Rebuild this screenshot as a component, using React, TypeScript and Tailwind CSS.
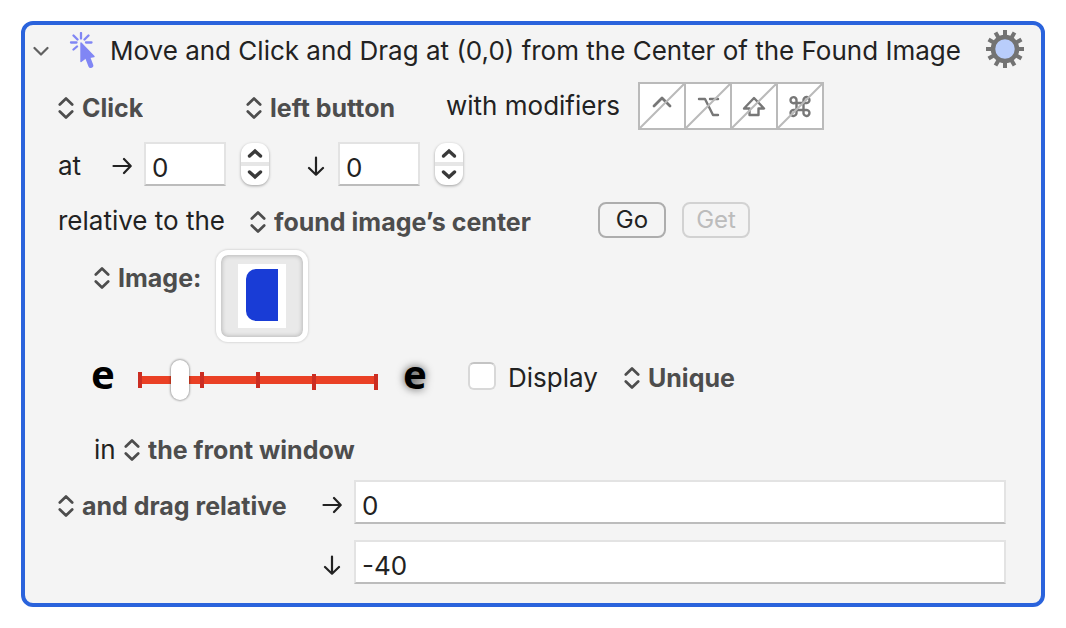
import type { ReactNode } from 'react'

interface PopupProps {
  label: string
  options: string[]
}

// pop-up menu with the chevrons on its left side
function Popup({ label, options }: PopupProps) {
  return (
    <div className="relative flex items-center">
      <svg
        className="pointer-events-none absolute left-0 h-6 w-4"
        viewBox="0 0 16 24"
        fill="none"
        stroke="#4d4d4d"
        strokeWidth="2.7"
        strokeLinecap="round"
        strokeLinejoin="round"
      >
        <path d="M1.8 8.5 L8 2.5 L14.2 8.5 M1.8 15.5 L8 21.5 L14.2 15.5" />
      </svg>
      <select
        aria-label={label}
        className="h-8 appearance-none bg-transparent pl-6 text-[25px] leading-8 font-bold text-[#4d4d4d] [field-sizing:content]"
      >
        {options.map((option) => (
          <option key={option}>{option}</option>
        ))}
      </select>
    </div>
  )
}

function ArrowRight() {
  return (
    <svg
      className="h-5 w-5 shrink-0"
      viewBox="0 0 20 20"
      fill="none"
      stroke="#222"
      strokeWidth="2.2"
      strokeLinecap="round"
      strokeLinejoin="round"
    >
      <path d="M1.5 10 H18.5 M12 3 L18.7 10 L12 17" />
    </svg>
  )
}

function ArrowDown() {
  return (
    <svg
      className="h-5 w-5 shrink-0"
      viewBox="0 0 20 20"
      fill="none"
      stroke="#222"
      strokeWidth="2.2"
      strokeLinecap="round"
      strokeLinejoin="round"
    >
      <path d="M10 1.5 V18.5 M3 12 L10 18.7 L17 12" />
    </svg>
  )
}

interface FieldProps {
  label: string
  value: string
  wide?: boolean
}

function Field({ label, value, wide = false }: FieldProps) {
  return (
    <input
      type="text"
      aria-label={label}
      defaultValue={value}
      className={`h-11 border-2 border-[#e3e3e3] border-b-[#bcbcbc] bg-white px-1.5 pt-1.5 text-[26px] text-[#222] ${
        wide ? 'min-w-0 flex-1' : 'w-[82px]'
      }`}
    />
  )
}

function Stepper({ label }: { label: string }) {
  return (
    <div className="flex h-[42px] w-7 flex-col overflow-hidden rounded-[11px] bg-white shadow-[0_1px_3px_rgba(0,0,0,0.35)]">
      <button
        aria-label={`Increase ${label}`}
        className="flex flex-1 items-center justify-center border-b-2 border-[#e6e6e6]"
      >
        <svg className="h-3 w-4" viewBox="0 0 16 12" fill="none" stroke="#3a3a3a" strokeWidth="3.4" strokeLinecap="round">
          <path d="M2.5 9 L8 4 L13.5 9" />
        </svg>
      </button>
      <button
        aria-label={`Decrease ${label}`}
        className="flex flex-1 items-center justify-center border-t-2 border-[#e6e6e6]"
      >
        <svg className="h-3 w-4" viewBox="0 0 16 12" fill="none" stroke="#3a3a3a" strokeWidth="3.4" strokeLinecap="round">
          <path d="M2.5 2 L8 7 L13.5 2" />
        </svg>
      </button>
    </div>
  )
}

// modifier key, crossed out while it is ignored
function Modifier({ label, children }: { label: string; children: ReactNode }) {
  return (
    <button aria-label={label} className="h-11 w-11 bg-white">
      <svg
        className="h-11 w-11"
        viewBox="0 0 44 44"
        fill="none"
        stroke="#777"
        strokeWidth="2.4"
        strokeLinecap="round"
        strokeLinejoin="round"
      >
        {children}
        <path d="M0 44 L44 0" stroke="#bababa" strokeWidth="2" />
      </svg>
    </button>
  )
}

function ClickIcon() {
  return (
    <svg className="h-[38px] w-[30px]" viewBox="0 0 30 38" fill="none" stroke="#8086f4" strokeLinecap="round">
      <path
        strokeWidth="2.3"
        d="M13 1 V6.5 M3 10.5 H8.5 M18 10.5 H23.5 M5.5 3.5 L9.5 7.5 M20.5 3.5 L16.5 7.5 M5.5 17.5 L9 14.5"
      />
      <path
        fill="#8086f4"
        strokeWidth="1.4"
        strokeLinejoin="round"
        d="M13 11 V29.5 L17.5 26 L26 24.5 Z"
      />
      <path strokeWidth="5" d="M19.5 25 L22.8 33.5" />
    </svg>
  )
}

function GearIcon() {
  const teeth = [0, 30, 60, 90, 120, 150, 180, 210, 240, 270, 300, 330]

  return (
    <svg className="h-[38px] w-[38px]" viewBox="0 0 38 38">
      {teeth.map((angle) => (
        <path key={angle} d="M19 0 V8" stroke="#737373" strokeWidth="4" transform={`rotate(${angle} 19 19)`} />
      ))}
      <circle cx="19" cy="19" r="12" fill="#b9cdfb" stroke="#737373" strokeWidth="4.5" />
    </svg>
  )
}

function ThresholdSlider() {
  return (
    <div className="relative h-[42px] w-[240px]">
      <svg className="absolute inset-0 h-[42px] w-[240px]" viewBox="0 0 240 42">
        <path d="M2 21 H238" stroke="#ea4025" strokeWidth="8" />
        <path d="M2 13 V29 M64 13 V29 M120 13 V29 M176 15 V31 M238 15 V31" stroke="#cb2d22" strokeWidth="4" />
      </svg>
      <input
        type="range"
        aria-label="Fuzziness"
        min="0"
        max="100"
        defaultValue="15"
        className="absolute inset-0 h-[42px] w-[240px] appearance-none bg-transparent [&::-webkit-slider-thumb]:h-[40px] [&::-webkit-slider-thumb]:w-[18px] [&::-webkit-slider-thumb]:appearance-none [&::-webkit-slider-thumb]:rounded-full [&::-webkit-slider-thumb]:bg-white [&::-webkit-slider-thumb]:shadow-[0_0_2px_1px_rgba(0,0,0,0.3)]"
      />
    </div>
  )
}

export default function App() {
  return (
    <div className="bg-white p-[21px] font-[Inter,'Liberation_Sans',sans-serif] text-[26px] leading-8 text-[#222]">
      <div className="rounded-xl border-4 border-[#2a63dc] bg-[#f4f4f4] pb-[19px]">
        {/* title */}
        <div className="flex h-[52px] items-center pr-[17px] pl-2">
          <button aria-label="Collapse action" className="mr-[19px]">
            <svg
              className="h-4 w-4"
              viewBox="0 0 16 16"
              fill="none"
              stroke="#606060"
              strokeWidth="2.2"
              strokeLinecap="round"
              strokeLinejoin="round"
            >
              <path d="M1.5 5 L8 11.5 L14.5 5" />
            </svg>
          </button>
          <ClickIcon />
          <h1 className="ml-3 flex-1 whitespace-nowrap">
            Move and Click and Drag at (0,0) from the Center of the Found Image
          </h1>
          <button aria-label="Action menu" className="pb-1">
            <GearIcon />
          </button>
        </div>

        <div className="pr-[35px] pl-[33px]">
          {/* click type */}
          <div className="mt-[5px] flex h-12 items-center">
            <div className="w-[188px] pt-1">
              <Popup label="Click type" options={['Click', 'Double Click']} />
            </div>
            <div className="w-[200px] pt-1">
              <Popup label="Mouse button" options={['left button', 'right button']} />
            </div>
            <span className="w-48 whitespace-nowrap">with modifiers</span>
            <div className="flex gap-0.5 border-2 border-[#bababa] bg-[#bababa]">
              <Modifier label="Control">
                <path d="M14 22 L22 14 L30 22" strokeWidth="2.8" />
              </Modifier>
              <Modifier label="Option">
                <path d="M13 15 H19 L27 31 H32 M24 15 H32" />
              </Modifier>
              <Modifier label="Shift">
                <path d="M22 14 L32 24.5 H26.5 V31 H17.5 V24.5 H12 Z" />
              </Modifier>
              <Modifier label="Command">
                <path d="M18.5 19 H25.5 V26 H18.5 Z M18.5 19 H16.5 A3 3 0 1 1 18.5 16.5 Z M25.5 19 V16.5 A3 3 0 1 1 28 19 Z M25.5 26 H28 A3 3 0 1 1 25.5 28.5 Z M18.5 26 V28.5 A3 3 0 1 1 16 26 Z" />
              </Modifier>
            </div>
          </div>

          {/* position */}
          <div className="mt-3 flex h-11 items-center">
            <span className="w-[54px] pt-1">at</span>
            <div className="pt-1">
              <ArrowRight />
            </div>
            <div className="mr-[15px] ml-3">
              <Field label="Horizontal position" value="0" />
            </div>
            <Stepper label="horizontal position" />
            <div className="mr-3 ml-[37px] pt-1">
              <ArrowDown />
            </div>
            <Field label="Vertical position" value="0" />
            <div className="ml-[15px]">
              <Stepper label="vertical position" />
            </div>
          </div>

          {/* origin */}
          <div className="mt-4 flex h-9 items-center">
            <span className="w-48 pt-0.5 whitespace-nowrap">relative to the</span>
            <div className="w-[348px] pt-1">
              <Popup label="Origin" options={['found image’s center', 'found image’s top left']} />
            </div>
            <button className="h-9 w-[68px] rounded-lg border-2 border-[#adadad] text-[24px] leading-8 text-[#222]">
              Go
            </button>
            <button
              disabled
              className="ml-4 h-9 w-[68px] rounded-lg border-2 border-[#d2d2d2] text-[24px] leading-8 text-[#bcbcbc]"
            >
              Get
            </button>
          </div>

          {/* image */}
          <div className="mt-3 flex items-start pl-9">
            <div className="w-[122px] pt-3">
              <Popup label="Image source" options={['Image:', 'Screen:']} />
            </div>
            <button
              aria-label="Image to find"
              className="flex h-[92px] w-[92px] items-center justify-center rounded-xl border-[5px] border-white bg-[#e9e9e9] shadow-[0_0_2px_1px_rgba(0,0,0,0.1),inset_0_0_4px_1px_rgba(0,0,0,0.2)]"
            >
              <svg className="h-16 w-12" viewBox="0 0 48 64">
                <path d="M0 0 H48 V64 H0 Z" fill="#fff" />
                <path d="M40 5 H18 A10 10 0 0 0 8 15 V47 A10 10 0 0 0 18 57 H40 Z" fill="#193cd6" />
              </svg>
            </button>
          </div>

          {/* fuzziness */}
          <div className="mt-3 flex h-12 items-center pl-[33px]">
            <span className="w-[47px] pb-2 font-['Noto_Sans'] text-[40px] leading-8 font-bold text-black">e</span>
            <div className="pt-1">
              <ThresholdSlider />
            </div>
            <span className="ml-[25px] w-[65px] pb-2 font-['Noto_Sans'] text-[40px] leading-8 font-bold text-black [text-shadow:0_0_8px_rgba(0,0,0,0.7)]">
              e
            </span>
            <label className="flex w-[156px] items-center gap-3">
              <input
                type="checkbox"
                className="-mt-1 h-7 w-7 shrink-0 appearance-none rounded-md border-2 border-[#d8d8d8] border-t-[#c4c4c4] bg-white"
              />
              Display
            </label>
            <Popup label="Match" options={['Unique', 'Any', 'Best']} />
          </div>

          {/* search area */}
          <div className="mt-8 flex h-8 items-center pl-9">
            <span className="w-[30px]">in</span>
            <Popup label="Search area" options={['the front window', 'all screens']} />
          </div>

          {/* drag */}
          <div className="mt-[14px] flex items-center">
            <div className="w-[264px] pt-2">
              <Popup label="Drag type" options={['and drag relative', 'and drag absolute']} />
            </div>
            <div className="mr-3 pt-1.5">
              <ArrowRight />
            </div>
            <Field label="Horizontal drag" value="0" wide />
          </div>
          <div className="mt-4 flex items-center pl-[264px]">
            <div className="mr-3 pt-1.5">
              <ArrowDown />
            </div>
            <Field label="Vertical drag" value="-40" wide />
          </div>
        </div>
      </div>
    </div>
  )
}
